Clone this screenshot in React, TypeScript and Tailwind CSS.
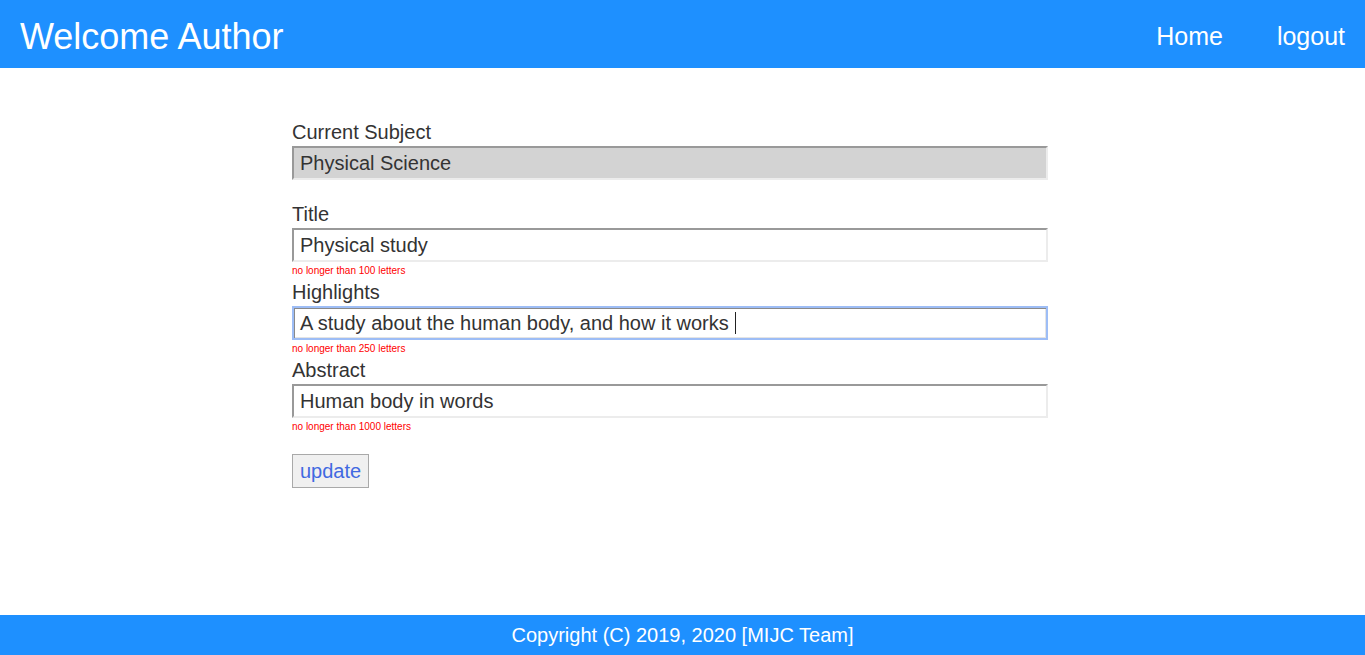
import React from "react";

const font = { fontFamily: '"Liberation Sans", Arial, sans-serif' };

function Field({
  label,
  value,
  bg = "bg-white",
  focused = false,
  hint,
  gapAfter = false,
}: {
  label: string;
  value: string;
  bg?: string;
  focused?: boolean;
  hint?: string;
  gapAfter?: boolean;
}) {
  return (
    <div className="flex flex-col">
      <label className="text-[20px] leading-[23px] text-[#333]">{label}</label>
      <div
        className={
          "mt-[2px] h-[34px] flex items-center pl-[6px] text-[20px] text-[#333] " +
          bg +
          " " +
          (focused
            ? "border-2 border-[#9dbdf6] shadow-[inset_1px_1px_0_#8a8a8a,inset_-1px_-1px_0_#e4e4e4]"
            : "border-2 border-t-[#999] border-l-[#999] border-r-[#ececec] border-b-[#ececec]")
        }
      >
        <span className="whitespace-pre">{value}</span>
        {focused && <span className="ml-[1px] inline-block w-px h-[22px] bg-[#222]" />}
      </div>
      {hint ? (
        <div className="h-[19px] pt-[3px] text-[10px] leading-[12px] text-[#ff0000]">{hint}</div>
      ) : null}
      {gapAfter ? <div className="h-[23px]" /> : null}
    </div>
  );
}

export default function App() {
  return (
    <div className="min-h-[655px] h-[655px] flex flex-col bg-white" style={font}>
      <header className="h-[68px] bg-[#1e90ff] flex items-center justify-between text-white shrink-0">
        <h1 className="pl-[20px] text-[36px] leading-none pt-[6px]">Welcome Author</h1>
        <nav className="flex items-center gap-[54px] pr-[20px] text-[25px] leading-none pt-[4px]">
          <span>Home</span>
          <span>logout</span>
        </nav>
      </header>
      <main className="flex-1">
        <div className="ml-[292px] w-[756px] pt-[53px] flex flex-col">
          <Field label="Current Subject" value="Physical Science" bg="bg-[#d3d3d3]" gapAfter />
          <Field label="Title" value="Physical study" hint="no longer than 100 letters" />
          <Field
            label="Highlights"
            value="A study about the human body, and how it works "
            focused
            hint="no longer than 250 letters"
          />
          <Field label="Abstract" value="Human body in words" hint="no longer than 1000 letters" />
          <div className="mt-[17px]">
            <button className="h-[34px] w-[77px] border border-[#a9a9a9] bg-[#f0f0f0] text-[20px] text-[#4169e1]">
              update
            </button>
          </div>
        </div>
      </main>
      <footer className="h-[40px] bg-[#1e90ff] flex items-center justify-center text-white text-[20px] shrink-0">
        Copyright (C) 2019, 2020 [MIJC Team]
      </footer>
    </div>
  );
}
